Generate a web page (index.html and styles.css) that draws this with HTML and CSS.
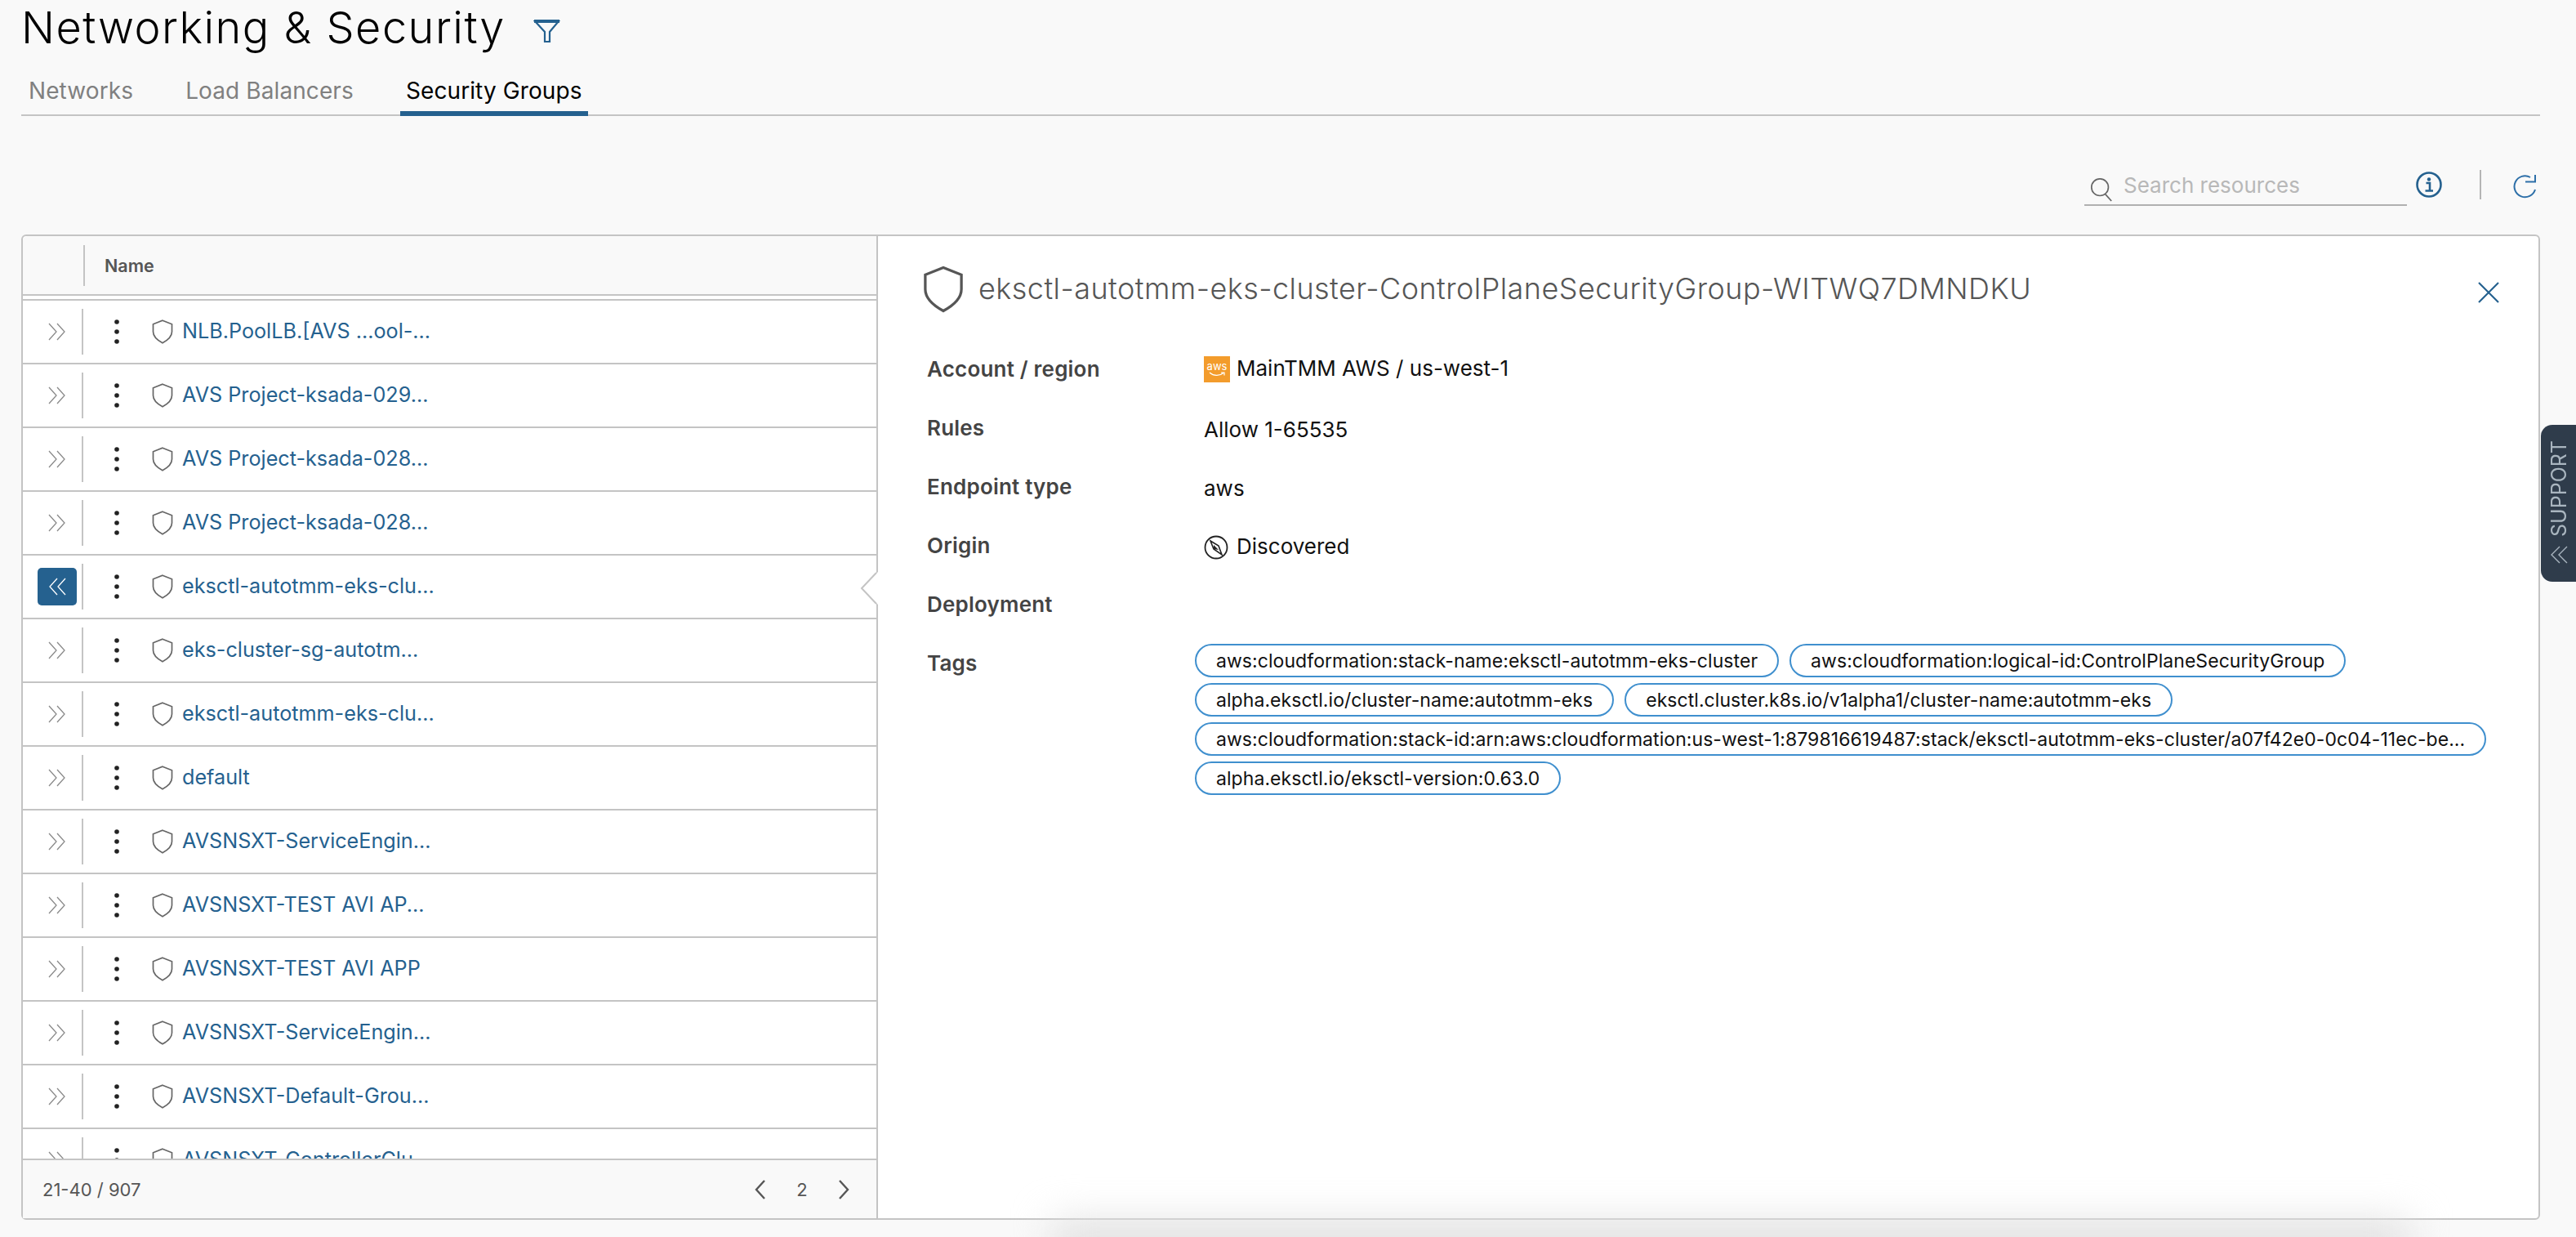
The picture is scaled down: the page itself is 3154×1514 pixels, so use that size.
FILE: index.html
```html
<!DOCTYPE html>
<html lang="en">
<head>
  <meta charset="UTF-8" />
  <title>Networking &amp; Security</title>
  <link rel="stylesheet" href="styles.css">
</head>
<body>
  <!-- shared icons -->
  <svg class="defs" width="0" height="0">
    <symbol id="i-chev" viewBox="0 0 22 22"><path d="M1 1l9 10-9 10M11 1l9 10-9 10" fill="none" stroke="currentColor" stroke-width="1.3"/></symbol>
    <symbol id="i-dots" viewBox="0 0 8 30"><circle cx="4" cy="3" r="2.8"/><circle cx="4" cy="15" r="2.8"/><circle cx="4" cy="27" r="2.8"/></symbol>
    <symbol id="i-shield" viewBox="0 0 26 30"><path d="M13 1.200l11.500 4.600V15c0 6.600-6 10.800-11.500 13.800C7.500 25.800 1.500 21.600 1.500 15V5.800z" fill="none" stroke="currentColor" stroke-width="1.7"/></symbol>
  </svg>

  <header class="page-head">
    <h1>Networking &amp; Security</h1>
    <svg class="filter-icon" viewBox="0 0 33 29"><path d="M2 2h29L20 15v12l-6 0V15z" fill="none" stroke="#25618f" stroke-width="2.200"/><path d="M1 2h31" stroke="#25618f" stroke-width="4"/></svg>
  </header>

  <nav class="tabs">
    <a class="tab">Networks</a>
    <a class="tab">Load Balancers</a>
    <a class="tab active">Security Groups</a>
  </nav>

  <div class="toolbar">
    <div class="search">
      <svg class="search-icon" viewBox="0 0 32 32"><circle cx="14" cy="13" r="11" fill="none" stroke="#666" stroke-width="1.800"/><path d="M21 22l8 9" stroke="#666" stroke-width="1.800"/></svg>
      <span class="placeholder">Search resources</span>
    </div>
    <svg class="info-icon" viewBox="0 0 32 32"><circle cx="16" cy="16" r="14.500" fill="none" stroke="#25618f" stroke-width="2.600"/><circle cx="16" cy="9.500" r="2.200" fill="#25618f"/><path d="M12.500 14h4.500v9.500M11.500 23.500h9.500" fill="none" stroke="#25618f" stroke-width="2.600"/></svg>
    <span class="tool-sep"></span>
    <svg class="refresh-icon" viewBox="0 0 30 30"><path d="M27 19A13 13 0 1 1 21 4" fill="none" stroke="#2d6fa8" stroke-width="2"/><path d="M15 9.500h12V1" fill="none" stroke="#2d6fa8" stroke-width="2"/></svg>
  </div>

  <main class="card">
    <section class="list">
      <div class="list-head">
        <span class="head-cell"></span>
        <span class="head-name">Name</span>
      </div>
      <div class="rows">
        <div class="row"><div class="toggle"><span class="toggle-btn"><svg class="chev"><use href="#i-chev"/></svg></span></div><svg class="dots"><use href="#i-dots"/></svg><svg class="shield"><use href="#i-shield"/></svg><a class="name">NLB.PoolLB.[AVS ...ool-...</a></div>
        <div class="row"><div class="toggle"><span class="toggle-btn"><svg class="chev"><use href="#i-chev"/></svg></span></div><svg class="dots"><use href="#i-dots"/></svg><svg class="shield"><use href="#i-shield"/></svg><a class="name">AVS Project-ksada-029...</a></div>
        <div class="row"><div class="toggle"><span class="toggle-btn"><svg class="chev"><use href="#i-chev"/></svg></span></div><svg class="dots"><use href="#i-dots"/></svg><svg class="shield"><use href="#i-shield"/></svg><a class="name">AVS Project-ksada-028...</a></div>
        <div class="row"><div class="toggle"><span class="toggle-btn"><svg class="chev"><use href="#i-chev"/></svg></span></div><svg class="dots"><use href="#i-dots"/></svg><svg class="shield"><use href="#i-shield"/></svg><a class="name">AVS Project-ksada-028...</a></div>
        <div class="row"><div class="toggle"><span class="toggle-btn selected"><svg class="chev flip"><use href="#i-chev"/></svg></span></div><svg class="dots"><use href="#i-dots"/></svg><svg class="shield"><use href="#i-shield"/></svg><a class="name">eksctl-autotmm-eks-clu...</a></div>
        <div class="row"><div class="toggle"><span class="toggle-btn"><svg class="chev"><use href="#i-chev"/></svg></span></div><svg class="dots"><use href="#i-dots"/></svg><svg class="shield"><use href="#i-shield"/></svg><a class="name">eks-cluster-sg-autotm...</a></div>
        <div class="row"><div class="toggle"><span class="toggle-btn"><svg class="chev"><use href="#i-chev"/></svg></span></div><svg class="dots"><use href="#i-dots"/></svg><svg class="shield"><use href="#i-shield"/></svg><a class="name">eksctl-autotmm-eks-clu...</a></div>
        <div class="row"><div class="toggle"><span class="toggle-btn"><svg class="chev"><use href="#i-chev"/></svg></span></div><svg class="dots"><use href="#i-dots"/></svg><svg class="shield"><use href="#i-shield"/></svg><a class="name">default</a></div>
        <div class="row"><div class="toggle"><span class="toggle-btn"><svg class="chev"><use href="#i-chev"/></svg></span></div><svg class="dots"><use href="#i-dots"/></svg><svg class="shield"><use href="#i-shield"/></svg><a class="name">AVSNSXT-ServiceEngin...</a></div>
        <div class="row"><div class="toggle"><span class="toggle-btn"><svg class="chev"><use href="#i-chev"/></svg></span></div><svg class="dots"><use href="#i-dots"/></svg><svg class="shield"><use href="#i-shield"/></svg><a class="name">AVSNSXT-TEST AVI AP...</a></div>
        <div class="row"><div class="toggle"><span class="toggle-btn"><svg class="chev"><use href="#i-chev"/></svg></span></div><svg class="dots"><use href="#i-dots"/></svg><svg class="shield"><use href="#i-shield"/></svg><a class="name">AVSNSXT-TEST AVI APP</a></div>
        <div class="row"><div class="toggle"><span class="toggle-btn"><svg class="chev"><use href="#i-chev"/></svg></span></div><svg class="dots"><use href="#i-dots"/></svg><svg class="shield"><use href="#i-shield"/></svg><a class="name">AVSNSXT-ServiceEngin...</a></div>
        <div class="row"><div class="toggle"><span class="toggle-btn"><svg class="chev"><use href="#i-chev"/></svg></span></div><svg class="dots"><use href="#i-dots"/></svg><svg class="shield"><use href="#i-shield"/></svg><a class="name">AVSNSXT-Default-Grou...</a></div>
        <div class="row"><div class="toggle"><span class="toggle-btn"><svg class="chev"><use href="#i-chev"/></svg></span></div><svg class="dots"><use href="#i-dots"/></svg><svg class="shield"><use href="#i-shield"/></svg><a class="name">AVSNSXT-ControllerClu...</a></div>
      </div>
      <footer class="list-foot">
        <span class="count">21-40 / 907</span>
        <div class="pager">
          <svg class="pager-chev" viewBox="0 0 14 24"><path d="M12 1L2 12l10 11" fill="none" stroke="#565656" stroke-width="2.400"/></svg>
          <span class="page-num">2</span>
          <svg class="pager-chev" viewBox="0 0 14 24"><path d="M2 1l10 11L2 23" fill="none" stroke="#565656" stroke-width="2.400"/></svg>
        </div>
      </footer>
    </section>

    <section class="detail">
      <svg class="notch" viewBox="0 0 22 40"><path d="M22 0L1 20l21 20z" fill="#fff"/><path d="M20 1L2 20l18 19" fill="none" stroke="#c4c4c4" stroke-width="2"/></svg>
      <div class="detail-head">
        <svg class="detail-shield"><use href="#i-shield"/></svg>
        <h2>eksctl-autotmm-eks-cluster-ControlPlaneSecurityGroup-WITWQ7DMNDKU</h2>
        <svg class="close" viewBox="0 0 28 28"><path d="M2 2l24 24M26 2L2 26" fill="none" stroke="#25618f" stroke-width="2.200"/></svg>
      </div>
      <dl class="props">
        <dt>Account / region</dt>
        <dd class="with-icon">
          <span class="aws-badge"><span>aws</span><svg viewBox="0 0 20 7"><path d="M1 1c5 4.500 12 4.500 17 .5M15 1h4v3.500" fill="none" stroke="#fff" stroke-width="1.200"/></svg></span>
          <span class="pull-up">MainTMM AWS / us-west-1</span>
        </dd>
        <dt>Rules</dt>
        <dd class="plain">Allow 1-65535</dd>
        <dt>Endpoint type</dt>
        <dd class="plain">aws</dd>
        <dt>Origin</dt>
        <dd class="with-icon origin">
          <svg class="origin-icon" viewBox="0 0 30 30"><circle cx="15" cy="15" r="13.500" fill="none" stroke="#222" stroke-width="1.800"/><path d="M8 7l10 6 4 11-10-7z" fill="none" stroke="#222" stroke-width="1.600"/><path d="M12 12l6 6-6-1z" fill="#222"/></svg>
          Discovered
        </dd>
        <dt>Deployment</dt>
        <dd></dd>
        <dt>Tags</dt>
        <dd class="tags">
          <span class="tag">aws:cloudformation:stack-name:eksctl-autotmm-eks-cluster</span>
          <span class="tag">aws:cloudformation:logical-id:ControlPlaneSecurityGroup</span>
          <span class="tag">alpha.eksctl.io/cluster-name:autotmm-eks</span>
          <span class="tag">eksctl.cluster.k8s.io/v1alpha1/cluster-name:autotmm-eks</span>
          <span class="tag">aws:cloudformation:stack-id:arn:aws:cloudformation:us-west-1:879816619487:stack/eksctl-autotmm-eks-cluster/a07f42e0-0c04-11ec-be...</span>
          <span class="tag">alpha.eksctl.io/eksctl-version:0.63.0</span>
        </dd>
      </dl>
    </section>
  </main>

  <aside class="support">
    <span class="support-label">SUPPORT</span>
    <svg class="support-chev" viewBox="0 0 22 22"><path d="M21 1L11 11l10 10M12 1L2 11l10 10" fill="none" stroke="#a9b5bf" stroke-width="1.400"/></svg>
  </aside>
  <div class="bottom-shade"></div>
</body>
</html>
```

FILE: styles.css
```css
body {
  font-family: Inter, "Noto Sans", sans-serif;
  margin: 0;
  padding: 0 44px 0 26px;
  height: 1514px;
  box-sizing: border-box;
  overflow: hidden;
  position: relative;
  background-color: #f9f9f9;
  color: #000;
}

.defs {
  position: absolute;
}

/* title + tabs */
.page-head {
  display: flex;
  align-items: center;
  height: 68px;
}

h1 {
  margin: 0;
  font-size: 54px;
  font-weight: 300;
  letter-spacing: 1.500px;
  line-height: 68px;
}

.filter-icon {
  width: 33px;
  height: 29px;
  margin-left: 34px;
  margin-top: 8px;
}

.tabs {
  display: flex;
  gap: 50px;
  height: 74px;
  padding-left: 2px;
  border-bottom: 2px solid #c4c4c4;
  box-sizing: border-box;
}

.tab {
  padding: 27px 7px 0;
  margin-bottom: -2px;
  font-size: 28px;
  letter-spacing: .1px;
  line-height: 32px;
  color: #808080;
  box-sizing: border-box;
}

.tab.active {
  color: #000;
  border-bottom: 6px solid #25618f;
}

/* search row */
.toolbar {
  display: flex;
  justify-content: flex-end;
  height: 145px;
  padding-top: 66px;
  box-sizing: border-box;
}

.search {
  display: flex;
  align-items: center;
  width: 395px;
  height: 44px;
  border-bottom: 2px solid #b0b0b0;
  box-sizing: border-box;
}

.search-icon {
  width: 30px;
  height: 30px;
  margin: 6px 0 0 6px;
}

.placeholder {
  margin: -6px 0 0 12px;
  font-size: 26px;
  color: #b8b8b8;
}

.info-icon {
  width: 32px;
  height: 32px;
  margin: 2px 0 0 11px;
}

.tool-sep {
  width: 2px;
  height: 36px;
  margin-left: 46px;
  background: #b5b5b5;
}

.refresh-icon {
  width: 30px;
  height: 30px;
  margin: 5px 3px 0 39px;
}

/* main card */
.card {
  display: flex;
  height: 1206px;
  background: #fff;
  border: 2px solid #c4c4c4;
  border-radius: 6px;
  box-sizing: border-box;
}

.list {
  display: flex;
  flex-direction: column;
  width: 1045px;
  flex: none;
}

.list-head {
  display: flex;
  align-items: center;
  flex: none;
  height: 73px;
  background: #f9f9f9;
  border-bottom: 2px solid #c4c4c4;
  box-sizing: border-box;
  border-radius: 6px 0 0 0;
}

.head-cell {
  width: 74px;
  height: 50px;
  border-right: 2px solid #c4c4c4;
  box-sizing: content-box;
}

.head-name {
  margin-left: 24px;
  font-size: 21.500px;
  font-weight: 600;
  color: #565656;
}

.rows {
  flex: 1;
  margin-top: 4px;
  overflow: hidden;
}

.row {
  display: flex;
  align-items: center;
  height: 78px;
  border-top: 2px solid #c4c4c4;
  box-sizing: border-box;
}

.toggle {
  display: flex;
  align-items: center;
  flex: none;
  width: 74px;
  height: 56px;
  padding-left: 18px;
  border-right: 2px solid #c4c4c4;
  box-sizing: border-box;
  margin-top: -1px;
}

.toggle-btn {
  display: flex;
  align-items: center;
  justify-content: center;
  width: 48px;
  height: 46px;
  color: #8a8a8a;
  border-radius: 5px;
}

.toggle-btn.selected {
  background: #25618f;
  color: #fff;
}

.chev {
  width: 22px;
  height: 22px;
}

.flip {
  transform: scaleX(-1);
}

.dots {
  flex: none;
  width: 8px;
  height: 30px;
  margin-left: 37px;
  fill: #222;
}

.shield {
  flex: none;
  width: 26px;
  height: 30px;
  margin-left: 39px;
  color: #666;
}

.name {
  margin: -2px 0 0 11px;
  font-size: 25.200px;
  color: #25618f;
  white-space: nowrap;
}

.list-foot {
  display: flex;
  align-items: center;
  justify-content: space-between;
  flex: none;
  height: 73px;
  padding: 0 33px 0 24px;
  background: #f9f9f9;
  border-top: 2px solid #c4c4c4;
  box-sizing: border-box;
  font-size: 22px;
  color: #565656;
}

.pager {
  display: flex;
  align-items: center;
}

.pager-chev {
  width: 14px;
  height: 24px;
}

.page-num {
  width: 88px;
  text-align: center;
}

/* detail pane */
.detail {
  position: relative;
  flex: 1;
  padding: 36px 47px 0 55px;
  border-left: 2px solid #c4c4c4;
  box-sizing: border-box;
}

.notch {
  position: absolute;
  left: -22px;
  top: 411px;
  width: 22px;
  height: 40px;
}

.detail-head {
  display: flex;
  align-items: center;
  height: 58px;
}

.detail-shield {
  flex: none;
  width: 50px;
  height: 58px;
  color: #565656;
}

h2 {
  margin: -3px 0 0 18px;
  font-size: 36px;
  font-weight: 300;
  letter-spacing: .45px;
  color: #565656;
  white-space: nowrap;
}

.close {
  flex: none;
  width: 28px;
  height: 28px;
  margin: 8px 0 0 auto;
}

.props {
  display: grid;
  grid-template-columns: 339px 1fr;
  grid-auto-rows: 72px;
  margin: 33px 0 0 5px;
  font-size: 26px;
  line-height: 72px;
}

dt {
  font-weight: 600;
  letter-spacing: .2px;
  color: #444;
}

dd {
  margin: 0;
  color: #111;
}

.plain {
  padding-top: 2px;
}

.with-icon {
  display: flex;
  align-items: center;
  gap: 8px;
}

.pull-up {
  margin-top: -2px;
}

.origin {
  padding-top: 2px;
}

.aws-badge {
  display: flex;
  flex-direction: column;
  align-items: center;
  justify-content: center;
  width: 32px;
  height: 32px;
  background: #f39c2c;
  color: #fff;
  font-size: 13px;
  line-height: 13px;
}

.aws-badge svg {
  width: 20px;
  height: 7px;
}

.origin-icon {
  width: 30px;
  height: 30px;
  margin: 2px 2px 0 0;
}

.tags {
  display: flex;
  flex-wrap: wrap;
  align-content: flex-start;
  gap: 7px 13px;
  margin-left: -11px;
  padding-top: 12px;
  height: 230px;
}

.tag {
  height: 41px;
  padding: 0 24px;
  border: 2px solid #3f8fce;
  border-radius: 21px;
  box-sizing: border-box;
  font-size: 23px;
  letter-spacing: .06px;
  line-height: 38px;
  white-space: nowrap;
}

/* floating bits */
.support {
  position: absolute;
  right: 0;
  top: 520px;
  display: flex;
  flex-direction: column;
  align-items: center;
  width: 43px;
  height: 192px;
  padding-top: 19px;
  background: #2f3c4b;
  border-radius: 14px 0 0 14px;
  box-sizing: border-box;
}

.support-label {
  writing-mode: vertical-rl;
  transform: rotate(180deg);
  font-size: 25px;
  line-height: 24px;
  color: #a9b5bf;
}

.support-chev {
  width: 22px;
  height: 22px;
  margin-top: 11px;
}

.bottom-shade {
  position: absolute;
  left: 1290px;
  width: 1660px;
  bottom: -40px;
  height: 60px;
  background: #e2e2e2;
  filter: blur(24px);
  pointer-events: none;
}
```
